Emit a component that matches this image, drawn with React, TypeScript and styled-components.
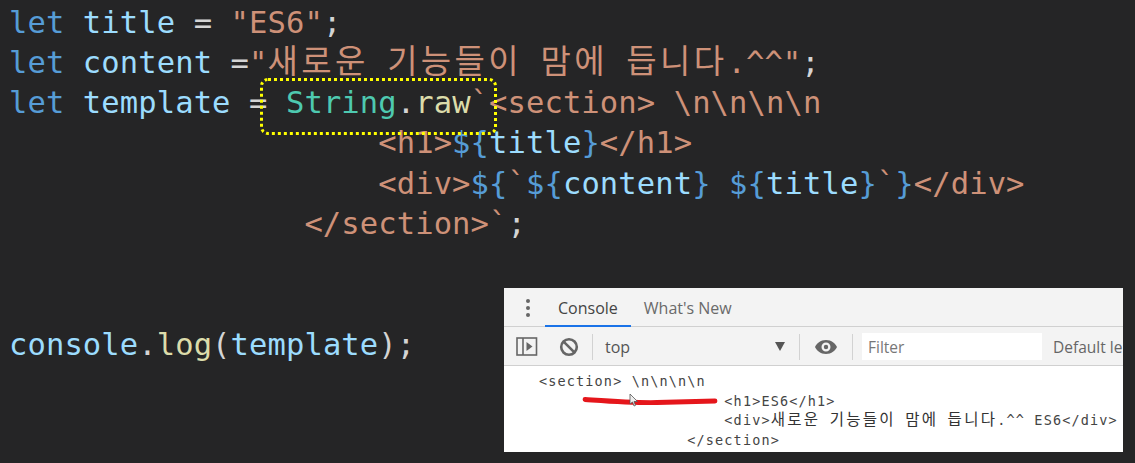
import React from "react";
import styled, { createGlobalStyle } from "styled-components";

const COLORS: Record<string, string> = {
    kw: "#569cd6",
    vr: "#9cdcfe",
    op: "#d4d4d4",
    st: "#ce9178",
    ko: "#ce9178",
    cl: "#4ec9b0",
    fn: "#dcdcaa",
};

type Tok = [string, string];

const codeLines: Tok[][] = [
    [["kw", "let "], ["vr", "title"], ["op", " = "], ["st", '"ES6"'], ["op", ";"]],
    [["kw", "let "], ["vr", "content"], ["op", " ="], ["st", '"'], ["ko", "새로운"], ["st", " "], ["ko", "기능들이"], ["st", " "], ["ko", "맘에"], ["st", " "], ["ko", "듭니다"], ["st", '.^^"'], ["op", ";"]],
    [["kw", "let "], ["vr", "template"], ["op", " = "], ["cl", "String"], ["op", "."], ["fn", "raw"], ["st", "`<section> \\n\\n\\n\\n"]],
    [["st", "                    <h1>"], ["kw", "${"], ["vr", "title"], ["kw", "}"], ["st", "</h1>"]],
    [["st", "                    <div>"], ["kw", "${"], ["st", "`"], ["kw", "${"], ["vr", "content"], ["kw", "}"], ["st", " "], ["kw", "${"], ["vr", "title"], ["kw", "}"], ["st", "`"], ["kw", "}"], ["st", "</div>"]],
    [["st", "                </section>`"], ["op", ";"]],
    [["op", " "]],
    [["op", " "]],
    [["vr", "console"], ["op", "."], ["fn", "log"], ["op", "("], ["vr", "template"], ["op", ");"]],
];

export default function App() {
    return (
        <Page>
            <GlobalStyle />
            <Code>
                {codeLines.map((line, i) => (
                    <CodeLine key={i}>
                        {line.map((t, j) => (
                            t[0] === "ko"
                                ? <CodeHangul key={j}>{t[1]}</CodeHangul>
                                : <Token key={j} $color={COLORS[t[0]]}>{t[1]}</Token>
                        ))}
                    </CodeLine>
                ))}
            </Code>

            <Highlight />

            <ConsolePanel>
                <TabBar>
                    <MoreDots>
                        <i /><i /><i />
                    </MoreDots>
                    <Tab $active>Console</Tab>
                    <Tab>What's New</Tab>
                </TabBar>
                <Toolbar>
                    <ToolIcon width="22" height="19" viewBox="0 0 22 19">
                        <rect x="1" y="1" width="19.500" height="17" fill="none" stroke="#666" strokeWidth="1.6" />
                        <line x1="7" y1="1" x2="7" y2="18" stroke="#666" strokeWidth="1.6" />
                        <path d="M10.5 5 L16.5 9.500 L10.5 14 Z" fill="#666" />
                    </ToolIcon>
                    <ToolIcon width="20" height="20" viewBox="0 0 20 20" $left={21}>
                        <circle cx="10" cy="10" r="7.8" fill="none" stroke="#666" strokeWidth="2.6" />
                        <line x1="4.6" y1="4.6" x2="15.4" y2="15.4" stroke="#666" strokeWidth="2.6" />
                    </ToolIcon>
                    <Divider $left={13} />
                    <ContextSelect>
                        <span>top</span>
                        <Arrow />
                    </ContextSelect>
                    <Divider $left={14} />
                    <ToolIcon width="24" height="16" viewBox="0 0 24 16" $left={14}>
                        <path fillRule="evenodd" fill="#666" d="M12 1 C6.5 1 2.5 4.5 1 8 C2.5 11.5 6.5 15 12 15 C17.5 15 21.5 11.500 23 8 C21.500 4.500 17.500 1 12 1 Z M12 3.500 A4.500 4.500 0 1 1 12 12.500 A4.500 4.500 0 1 1 12 3.500 Z M12 5.800 A2.200 2.200 0 1 0 12 10.200 A2.200 2.200 0 1 0 12 5.800 Z" />
                    </ToolIcon>
                    <Divider $left={14} />
                    <FilterBox>Filter</FilterBox>
                    <Levels>Default le</Levels>
                </Toolbar>
                <Output>
                    <OutLine>{"<section> \\n\\n\\n\\n"}</OutLine>
                    <OutLine>{"                    <h1>ES6</h1>"}</OutLine>
                    <OutLine>{"                    <div>"}<Hangul>새로운</Hangul>{" "}<Hangul>기능들이</Hangul>{" "}<Hangul>맘에</Hangul>{" "}<Hangul>듭니다</Hangul>{".^^ ES6</div>"}</OutLine>
                    <OutLine>{"                </section>"}</OutLine>
                </Output>
                <RedMark width="136" height="12" viewBox="0 0 136 12">
                    <path d="M3 4.500 C25 6 50 8 75 7.500 C95 7 115 6.500 133 6" fill="none" stroke="#e5161b" strokeWidth="4.800" strokeLinecap="round" />
                </RedMark>
                <Cursor width="10" height="14" viewBox="0 0 10 14">
                    <path d="M1 1 L1 11 L3.500 9 L5 13 L6.500 12.400 L5 8.500 L8.500 8.500 Z" fill="#eee" stroke="#555" strokeWidth="0.8" />
                </Cursor>
            </ConsolePanel>
        </Page>
    );
}

const GlobalStyle = createGlobalStyle`
    html, body {
        margin: 0;
        padding: 0;
        background: #252526;
    }
`;

const Page = styled.div`
    position: relative;
    width: 1135px;
    height: 463px;
    overflow: hidden;
    background: #252526;
`;

const Code = styled.div`
    padding: 2.5px 0 0 9px;
    font-family: "DejaVu Sans Mono", "Noto Sans CJK KR", monospace;
    font-size: 30.5px;
    line-height: 40px;
    letter-spacing: 0.1px;
`;

const CodeLine = styled.div`
    height: 40.3px;
    white-space: pre;
`;

const Token = styled.span<{ $color: string }>`
    color: ${(p) => p.$color};
`;

const CodeHangul = styled.span`
    color: #ce9178;
    font-family: "Noto Sans CJK KR", sans-serif;
    font-size: 33px;
    line-height: 1;
    letter-spacing: 3.35px;
`;

const Highlight = styled.div`
    position: absolute;
    left: 260px;
    top: 78px;
    width: 231px;
    height: 51px;
    border: 3.5px dotted #ffff00;
    border-radius: 8px;
`;

const ConsolePanel = styled.div`
    position: absolute;
    left: 504px;
    top: 288px;
    width: 619px;
    height: 164px;
    overflow: hidden;
    display: flex;
    flex-direction: column;
    background: #fff;
    font-family: "Open Sans", "Liberation Sans", sans-serif;
`;

const TabBar = styled.div`
    display: flex;
    align-items: stretch;
    height: 38px;
    padding-left: 22px;
    background: #f3f3f3;
    border-bottom: 1px solid #d0d0d0;
`;

const MoreDots = styled.div`
    display: flex;
    flex-direction: column;
    justify-content: center;
    gap: 3px;
    width: 19px;
    padding-top: 2px;
    i {
        display: block;
        width: 4px;
        height: 4px;
        border-radius: 50%;
        background: #666;
    }
`;

const Tab = styled.div<{ $active?: boolean }>`
    display: flex;
    align-items: center;
    padding: 3px 13px 0;
    font-size: 16px;
    color: ${(p) => (p.$active ? "#444" : "#6a6a6a")};
    border-bottom: 2px solid ${(p) => (p.$active ? "#1a73e8" : "transparent")};
    margin-bottom: -1px;
`;

const Toolbar = styled.div`
    display: flex;
    align-items: center;
    height: 37px;
    padding: 1px 0 0 12px;
    background: #f3f3f3;
    border-bottom: 1px solid #d0d0d0;
`;

const ToolIcon = styled.svg<{ $left?: number }>`
    flex: none;
    margin-left: ${(p) => p.$left ?? 0}px;
`;

const Divider = styled.div<{ $left: number }>`
    flex: none;
    width: 1px;
    height: 26px;
    margin-left: ${(p) => p.$left}px;
    background: #d2d2d2;
`;

const ContextSelect = styled.div`
    display: flex;
    align-items: center;
    justify-content: space-between;
    width: 192px;
    box-sizing: border-box;
    padding: 0 0 0 12px;
    font-size: 16px;
    color: #555;
`;

const Arrow = styled.div`
    width: 0;
    height: 0;
    border-left: 5px solid transparent;
    border-right: 5px solid transparent;
    border-top: 9px solid #555;
`;

const FilterBox = styled.div`
    flex: none;
    width: 180px;
    height: 27px;
    margin-left: 9px;
    padding-left: 6px;
    box-sizing: border-box;
    line-height: 28px;
    font-size: 15.5px;
    color: #777;
    background: #fff;
`;

const Levels = styled.div`
    margin-left: 11px;
    font-size: 15.5px;
    color: #666;
    white-space: pre;
`;

const Output = styled.div`
    flex: 1;
    padding: 6px 0 0 35px;
    background: #fff;
    font-family: "DejaVu Sans Mono", monospace;
    font-size: 13.5px;
    letter-spacing: 1.14px;
    line-height: 19.6px;
    color: #444;
`;

const OutLine = styled.div`
    white-space: pre;
`;

const Hangul = styled.span`
    font-family: "Noto Sans CJK KR", sans-serif;
    font-size: 15.5px;
    line-height: 1;
    letter-spacing: 2.3px;
    color: #333;
`;

const RedMark = styled.svg`
    position: absolute;
    left: 78px;
    top: 107px;
`;

const Cursor = styled.svg`
    position: absolute;
    left: 125px;
    top: 105px;
`;
